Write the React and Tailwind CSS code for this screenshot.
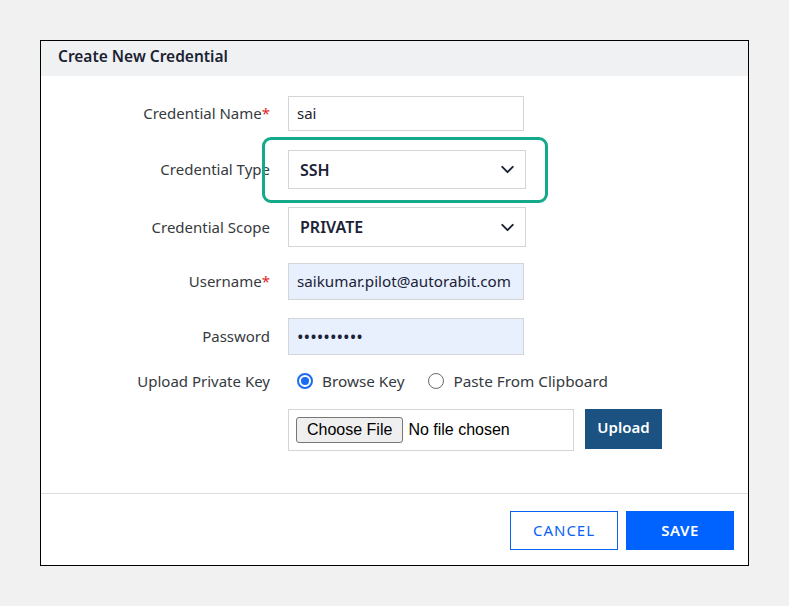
import { ChevronDown } from "lucide-react";

const Label = ({ children, required }) => (
  <span className="w-[229px] shrink-0 text-right text-[15px] text-[#353a40]">
    {children}
    {required && <span className="text-[#e02424]">*</span>}
  </span>
);

const SelectBox = ({ value }) => (
  <div className="flex h-full w-[238px] items-center justify-between border border-[#d3d5d9] bg-white pl-[11px] pr-[7px]">
    <span className="text-[16px] font-semibold text-[#1c2236]">{value}</span>
    <ChevronDown size={21} strokeWidth={2.2} className="text-[#1c2236]" />
  </div>
);

const Radio = ({ checked, label }) => (
  <label className="flex items-center gap-[9px]">
    {checked ? (
      <span className="flex h-[16px] w-[16px] items-center justify-center rounded-full border-2 border-[#1a6cf0] bg-white">
        <span className="h-[8px] w-[8px] rounded-full bg-[#1a6cf0]" />
      </span>
    ) : (
      <span className="h-[16px] w-[16px] rounded-full border border-[#6b6b6b] bg-white" />
    )}
    <span className="text-[15.3px] text-[#353a40]">{label}</span>
  </label>
);

export default function App() {
  return (
    <div
      className="min-h-[606px] w-full bg-[#f1f1f1] pl-[40px] pt-[40px]"
      style={{ fontFamily: '"Noto Sans", Arial, sans-serif' }}
    >
      <div className="flex h-[526px] w-[709px] flex-col border border-black bg-white">
        <div className="flex h-[35px] items-center bg-[#f0f1f3] pb-[3px] pl-[17px]">
          <h1 className="text-[15.5px] font-semibold text-[#1b2233]">Create New Credential</h1>
        </div>

        <div className="flex flex-1 flex-col pt-[20px]">
          <div className="flex h-[35px] items-center">
            <Label required>Credential Name</Label>
            <div className="ml-[18px] flex h-full w-[236px] items-center border border-[#d3d5d9] px-[8px] text-[15px] text-[#1c2236]">
              sai
            </div>
          </div>

          <div className="mt-[19px] flex h-[39px] items-center">
            <Label>Credential Type</Label>
            <div className="relative ml-[18px] h-full">
              <SelectBox value="SSH" />
              <div className="pointer-events-none absolute left-[-26px] top-[-13px] h-[66px] w-[286px] rounded-[9px] border-[3px] border-[#14a98a]" />
            </div>
          </div>

          <div className="mt-[18px] flex h-[40px] items-center">
            <Label>Credential Scope</Label>
            <div className="ml-[18px] h-full">
              <SelectBox value="PRIVATE" />
            </div>
          </div>

          <div className="mt-[16px] flex h-[37px] items-center">
            <Label required>Username</Label>
            <div className="ml-[18px] flex h-full w-[236px] items-center border border-[#d3d5d9] bg-[#e8f0fe] px-[8px] text-[15.2px] text-[#1c2236]">
              saikumar.pilot@autorabit.com
            </div>
          </div>

          <div className="mt-[18px] flex h-[37px] items-center">
            <Label>Password</Label>
            <div className="ml-[18px] flex h-full w-[236px] items-center border border-[#d3d5d9] bg-[#e8f0fe] px-[8px] text-[17.5px] text-[#1c2236]">
              ••••••••••
            </div>
          </div>

          <div className="mt-[17px] flex h-[18px] items-center">
            <Label>Upload Private Key</Label>
            <div className="ml-[27px] flex items-center gap-[24px]">
              <Radio checked label="Browse Key" />
              <Radio label="Paste From Clipboard" />
            </div>
          </div>

          <div className="ml-[247px] mt-[19px] flex items-start gap-[11px]">
            <div className="flex h-[42px] w-[286px] items-center border border-[#d3d5d9] pl-[7px]">
              <span
                className="flex h-[26px] items-center rounded-[3px] border border-[#767676] bg-[#efefef] px-[10px] text-[16px] text-black"
                style={{ fontFamily: '"Liberation Sans", Arial, sans-serif' }}
              >
                Choose File
              </span>
              <span
                className="ml-[5px] text-[16px] text-black"
                style={{ fontFamily: '"Liberation Sans", Arial, sans-serif' }}
              >
                No file chosen
              </span>
            </div>
            <button className="h-[40px] w-[77px] bg-[#1b5281] pb-[3px] text-[15px] font-semibold text-white">
              Upload
            </button>
          </div>
        </div>

        <div className="flex h-[72px] items-start justify-end gap-[8px] border-t border-[#dedede] pr-[14px] pt-[17px]">
          <button className="h-[39px] w-[108px] border border-[#0a62f5] text-[15px] tracking-[1px] text-[#0a62f5]">
            CANCEL
          </button>
          <button className="h-[39px] w-[108px] bg-[#0062ff] text-[15px] font-semibold tracking-[0.5px] text-white">
            SAVE
          </button>
        </div>
      </div>
    </div>
  );
}
